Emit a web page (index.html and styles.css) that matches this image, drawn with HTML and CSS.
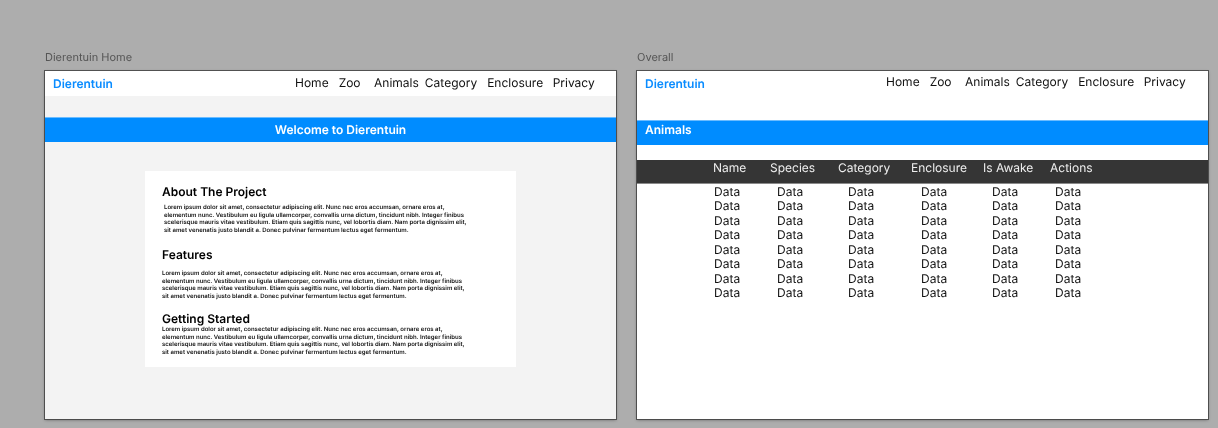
FILE: index.html
```html
<!DOCTYPE html>
<html lang="en">
<head>
<meta charset="utf-8">
<title>Dierentuin</title>
<link rel="stylesheet" href="styles.css">
</head>
<body>
<section class="artboard home">
  <p class="artboard-label">Dierentuin Home</p>
  <div class="frame frame-gray">
    <header class="nav">
      <span class="brand">Dierentuin</span>
      <nav class="links">
        <a class="l-home">Home</a><a class="l-zoo">Zoo</a><a class="l-animals">Animals</a><a class="l-category">Category</a><a class="l-enclosure">Enclosure</a><a class="l-privacy">Privacy</a>
      </nav>
    </header>
    <div class="banner banner-center">Welcome to Dierentuin</div>
    <main class="card">
      <h2 class="h-about">About The Project</h2>
      <p class="p-about">Lorem ipsum dolor sit amet, consectetur adipiscing elit. Nunc nec eros accumsan, ornare eros at,<br>elementum nunc. Vestibulum eu ligula ullamcorper, convallis urna dictum, tincidunt nibh. Integer finibus<br>scelerisque mauris vitae vestibulum. Etiam quis sagittis nunc, vel lobortis diam. Nam porta dignissim elit,<br>sit amet venenatis justo blandit a. Donec pulvinar fermentum lectus eget fermentum.</p>
      <h2 class="h-features">Features</h2>
      <p class="p-features">Lorem ipsum dolor sit amet, consectetur adipiscing elit. Nunc nec eros accumsan, ornare eros at,<br>elementum nunc. Vestibulum eu ligula ullamcorper, convallis urna dictum, tincidunt nibh. Integer finibus<br>scelerisque mauris vitae vestibulum. Etiam quis sagittis nunc, vel lobortis diam. Nam porta dignissim elit,<br>sit amet venenatis justo blandit a. Donec pulvinar fermentum lectus eget fermentum.</p>
      <h2 class="h-started">Getting Started</h2>
      <p>Lorem ipsum dolor sit amet, consectetur adipiscing elit. Nunc nec eros accumsan, ornare eros at,<br>elementum nunc. Vestibulum eu ligula ullamcorper, convallis urna dictum, tincidunt nibh. Integer finibus<br>scelerisque mauris vitae vestibulum. Etiam quis sagittis nunc, vel lobortis diam. Nam porta dignissim elit,<br>sit amet venenatis justo blandit a. Donec pulvinar fermentum lectus eget fermentum.</p>
    </main>
  </div>
</section>
<section class="artboard overall">
  <p class="artboard-label">Overall</p>
  <div class="frame">
    <header class="nav nav-tall">
      <span class="brand">Dierentuin</span>
      <nav class="links links-high">
        <a class="l-home">Home</a><a class="l-zoo">Zoo</a><a class="l-animals">Animals</a><a class="l-category">Category</a><a class="l-enclosure">Enclosure</a><a class="l-privacy">Privacy</a>
      </nav>
    </header>
    <div class="banner banner-left">Animals</div>
    <div class="thead">
      <span>Name</span><span>Species</span><span>Category</span><span>Enclosure</span><span>Is Awake</span><span>Actions</span>
    </div>
    <div class="tbody">
      <span>Data</span><span>Data</span><span>Data</span><span>Data</span><span>Data</span><span>Data</span>
      <span>Data</span><span>Data</span><span>Data</span><span>Data</span><span>Data</span><span>Data</span>
      <span>Data</span><span>Data</span><span>Data</span><span>Data</span><span>Data</span><span>Data</span>
      <span>Data</span><span>Data</span><span>Data</span><span>Data</span><span>Data</span><span>Data</span>
      <span>Data</span><span>Data</span><span>Data</span><span>Data</span><span>Data</span><span>Data</span>
      <span>Data</span><span>Data</span><span>Data</span><span>Data</span><span>Data</span><span>Data</span>
      <span>Data</span><span>Data</span><span>Data</span><span>Data</span><span>Data</span><span>Data</span>
      <span>Data</span><span>Data</span><span>Data</span><span>Data</span><span>Data</span><span>Data</span>
    </div>
  </div>
</section>
</body>
</html>
```
FILE: styles.css
```css
* { box-sizing: border-box; }
html, body { margin: 0; height: 100%; }
body {
  position: relative;
  overflow: hidden;
  background: #adadad;
  font-family: Inter, "Liberation Sans", sans-serif;
  color: #000;
  text-rendering: geometricPrecision;
}
.artboard { position: absolute; top: 51px; width: 571px; will-change: opacity; }
.home { left: 45px; }
.overall { left: 637px; }
.artboard-label {
  margin: 0;
  height: 20px;
  font-size: 11px;
  line-height: 13px;
  color: #555;
}
.frame {
  height: 348px;
  background: #fff;
  box-shadow: 0 0 0 1px rgba(60, 60, 60, .8), 0 1px 3px rgba(0, 0, 0, .4);
  overflow: hidden;
}
.frame-gray { background: #f3f3f3; }
.nav {
  display: flex;
  justify-content: space-between;
  height: 25px;
  background: #fff;
  padding-left: 8px;
}
.nav-tall { height: 49px; }
.brand {
  margin-top: 5px;
  font-size: 12px;
  line-height: 16px;
  font-weight: 600;
  color: #0a8cff;
}
.links {
  display: flex;
  align-items: flex-start;
  padding-top: 4px;
  width: 321px;
  font-size: 12px;
  line-height: 16px;
  color: #111;
}
.links-high { padding-top: 3px; width: 322px; }
.l-zoo { margin-left: 10px; }
.l-animals { margin-left: 13.5px; }
.l-category { margin-left: 6px; }
.l-enclosure { margin-left: 10px; }
.l-privacy { margin-left: 9.5px; }
.banner {
  height: 25px;
  background: #008cff;
  border-top: 1px solid #6bbcff;
  color: #fff;
  font-size: 12px;
  font-weight: 600;
}
.banner-center { margin-top: 21px; padding-left: 20px; text-align: center; line-height: 24px; }
.banner-left { padding-left: 8px; line-height: 18px; }
.card {
  width: 371px;
  height: 196px;
  margin: 29px 0 0 100px;
  padding: 14px 17px 0;
  background: #fff;
}
.card h2 {
  margin: 0;
  font-size: 12px;
  line-height: 14px;
  font-weight: 600;
  color: #000;
}
.card p {
  margin: 0;
  font-size: 6px;
  line-height: 7.5px;
  font-weight: 600;
  color: #111;
  white-space: nowrap;
}
.card .p-about { margin: 5px 0 0 2px; }
.card .h-features { margin-top: 14px; }
.card .p-features { margin-top: 8px; }
.card .h-started { margin-top: 12px; }
.thead, .tbody {
  display: grid;
  font-size: 12px;
}
.thead {
  grid-template-columns: 57px 68px 73px 72px 67px 1fr;
  height: 24px;
  margin-top: 15px;
  padding-left: 76px;
  background: #353535;
  border-bottom: 1px solid #8a8a8a;
  color: #eee;
  line-height: 16px;
}
.tbody {
  grid-template-columns: 63px 71px 73px 71px 63px 1fr;
  grid-auto-rows: 14.5px;
  padding: 0.5px 0 0 77px;
  line-height: 14.5px;
  color: #111;
}
```
